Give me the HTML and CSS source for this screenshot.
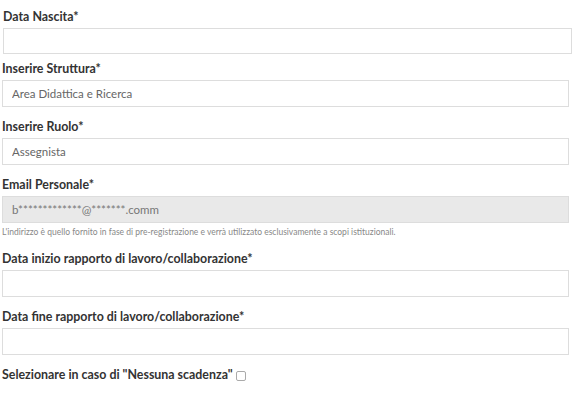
FILE: index.html
```html
<html lang="it"><head>
    <meta charset="UTF-8">
    <meta name="viewport" content="width=device-width, initial-scale=1.0">
    <title>Registrazione</title>
    <link rel="stylesheet" href="styles.css">
</head>
<body>
    <form class="form">
        <div class="group group-first">
            <label for="dataNascita">Data Nascita*</label>
            <input type="text" name="dataNascita" id="dataNascita">
        </div>

        <div class="group">
            <label for="struttura">Inserire Struttura*</label>
            <input type="text" name="struttura" id="struttura" value="Area Didattica e Ricerca">
        </div>

        <div class="group">
            <label for="ruolo">Inserire Ruolo*</label>
            <input type="text" name="ruolo" id="ruolo" value="Assegnista">
        </div>

        <div class="group">
            <label for="email">Email Personale*</label>
            <input type="text" name="email" id="email" value="b*************@*******.comm" disabled>
            <p class="help">L'indirizzo è quello fornito in fase di pre-registrazione e verrà utilizzato esclusivamente a scopi istituzionali.</p>
        </div>

        <div class="group">
            <label for="dataInizio">Data inizio rapporto di lavoro/collaborazione*</label>
            <input type="text" name="dataInizio" id="dataInizio">
        </div>

        <div class="group">
            <label for="dataFine">Data fine rapporto di lavoro/collaborazione*</label>
            <input type="text" name="dataFine" id="dataFine">
        </div>

        <div class="group check-row">
            <label for="nessunaScadenza">Selezionare in caso di "Nessuna scadenza"</label>
            <input type="checkbox" name="nessunaScadenza" id="nessunaScadenza">
        </div>
    </form>
</body></html>
```

FILE: styles.css
```css
body {
    font-family: Lato, "Liberation Sans", sans-serif;
    margin: 0;
    padding: 0;
    background-color: #fff;
}
.form {
    width: 567px;
    margin: 0 0 0 2px;
}
.group {
    margin-bottom: 12px;
}
.group-first {
    padding-top: 9px;
    margin: 0 -3px 7px 1px;
}
label {
    display: block;
    font-size: 12.4px;
    line-height: 16px;
    font-weight: bold;
    color: #333;
    margin-bottom: 3px;
}
input[type="text"] {
    display: block;
    width: 100%;
    height: 27px;
    padding: 0 9px;
    border: 1px solid #ddd;
    border-radius: 0;
    box-sizing: border-box;
    font-family: inherit;
    font-size: 11.5px;
    color: #666;
    background-color: #fff;
}
.group-first input[type="text"] {
    height: 26px;
}
input[type="text"]:disabled {
    background-color: #e9e9e9;
    color: #777;
}
.help {
    margin: 3px 0 0;
    font-size: 8.5px;
    line-height: 13px;
    color: #888;
}
.check-row {
    display: flex;
    align-items: center;
}
.check-row label {
    margin: 0;
}
input[type="checkbox"] {
    appearance: none;
    width: 10px;
    height: 10px;
    margin: 2px 0 0 3px;
    border: 1px solid #aaa;
    border-radius: 2px;
    background-color: #fff;
}
```
